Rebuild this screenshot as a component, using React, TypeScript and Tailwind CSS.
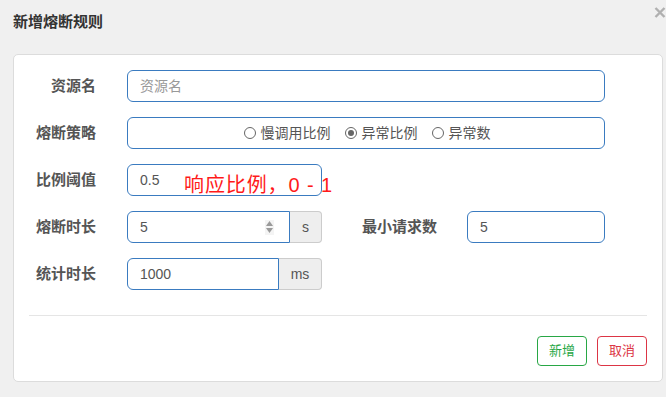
import React from "react";

const FONT = '"Liberation Sans", "Noto Sans CJK SC", sans-serif';

function Label({ children, w = "w-[67px]" }: { children: React.ReactNode; w?: string }) {
  return (
    <div className={`${w} shrink-0 text-right font-bold text-[15px] leading-[20px] text-[#555]`}>{children}</div>
  );
}

function Radio({ checked, label }: { checked?: boolean; label: string }) {
  return (
    <div className="flex items-center">
      <span className="w-[12px] h-[12px] rounded-full border border-[#666] bg-white flex items-center justify-center">
        {checked && <span className="w-[6px] h-[6px] rounded-full bg-[#666]" />}
      </span>
      <span className="ml-[5px] text-[14px] text-[#555] leading-[20px]">{label}</span>
    </div>
  );
}

export default function App() {
  return (
    <div className="w-[666px] h-[397px] bg-[#f0f0f0] relative overflow-hidden" style={{ fontFamily: FONT }}>
      <div className="h-[54px] pl-[13px] pt-[12px]">
        <div className="font-bold text-[15px] leading-[20px] text-[#333]">新增熔断规则</div>
      </div>
      <svg className="absolute top-[7px] right-0" width="12" height="11" viewBox="0 0 12 11">
        <path d="M1.5 1 L10.5 10 M10.5 1 L1.5 10" stroke="#b0b0b0" strokeWidth="2.4" />
      </svg>

      <div className="ml-[13px] w-[650px] h-[328px] bg-white border border-[#dcdcdc] rounded-[5px] pt-[15px] px-[15px]">
        <div className="flex flex-col gap-[15px]">
          <div className="h-[32px] flex items-center">
            <Label>资源名</Label>
            <div className="ml-[31px] w-[478px] h-[32px] border border-[#3a7bc0] rounded-[6px] px-3 flex items-center text-[14px] text-[#999]">
              资源名
            </div>
          </div>

          <div className="h-[32px] flex items-center">
            <Label>熔断策略</Label>
            <div className="ml-[31px] w-[478px] h-[32px] border border-[#3a7bc0] rounded-[6px] flex items-center justify-center gap-[14px] pl-[2px]">
              <Radio label="慢调用比例" />
              <Radio checked label="异常比例" />
              <Radio label="异常数" />
            </div>
          </div>

          <div className="h-[32px] flex items-center">
            <Label>比例阈值</Label>
            <div className="ml-[31px] w-[195px] h-[32px] relative">
              <div className="w-full h-full border border-[#3a7bc0] rounded-[6px] px-3 flex items-center text-[14px] text-[#555]">
                0.5
              </div>
              <span className="absolute left-[57px] top-[11px] whitespace-nowrap text-[20px] tracking-[0.9px] leading-none text-[#ff1a1a]">
                响应比例，0 - 1
              </span>
            </div>
          </div>

          <div className="h-[32px] flex items-center">
            <Label>熔断时长</Label>
            <div className="ml-[31px] w-[195px] h-[32px] flex">
              <div className="w-[163px] h-full border border-[#3a7bc0] rounded-l-[6px] px-3 flex items-center justify-between text-[14px] text-[#555]">
                <span>5</span>
                <span className="w-[9px] h-[15px] bg-[#f4f4f4] flex flex-col items-center justify-center gap-[2px] mr-[3px]">
                  <svg width="7" height="5" viewBox="0 0 7 5"><path d="M3.5 0 L7 5 L0 5 Z" fill="#9a9a9a" /></svg>
                  <svg width="7" height="5" viewBox="0 0 7 5"><path d="M0 0 L7 0 L3.5 5 Z" fill="#9a9a9a" /></svg>
                </span>
              </div>
              <div className="flex-1 h-full bg-[#eeeeee] border border-l-0 border-[#cccccc] rounded-r-[4px] flex items-center justify-center text-[14px] text-[#555]">
                s
              </div>
            </div>
            <Label w="w-[115px]">最小请求数</Label>
            <div className="ml-[30px] w-[138px] h-[32px] border border-[#3a7bc0] rounded-[6px] px-3 flex items-center text-[14px] text-[#555]">
              5
            </div>
          </div>

          <div className="h-[32px] flex items-center">
            <Label>统计时长</Label>
            <div className="ml-[31px] w-[195px] h-[32px] flex">
              <div className="w-[152px] h-full border border-[#3a7bc0] rounded-l-[6px] px-3 flex items-center text-[14px] text-[#555]">
                1000
              </div>
              <div className="flex-1 h-full bg-[#eeeeee] border border-l-0 border-[#cccccc] rounded-r-[4px] flex items-center justify-center text-[14px] text-[#555]">
                ms
              </div>
            </div>
          </div>
        </div>

        <div className="mt-[25px] h-px bg-[#e5e5e5]" />

        <div className="mt-[20px] flex justify-end gap-[10px]">
          <div className="w-[50px] h-[30px] border border-[#28a745] rounded-[4px] flex items-center justify-center text-[13px] text-[#28a745]">
            新增
          </div>
          <div className="w-[50px] h-[30px] border border-[#dc3545] rounded-[4px] flex items-center justify-center text-[13px] text-[#dc3545]">
            取消
          </div>
        </div>
      </div>
    </div>
  );
}
